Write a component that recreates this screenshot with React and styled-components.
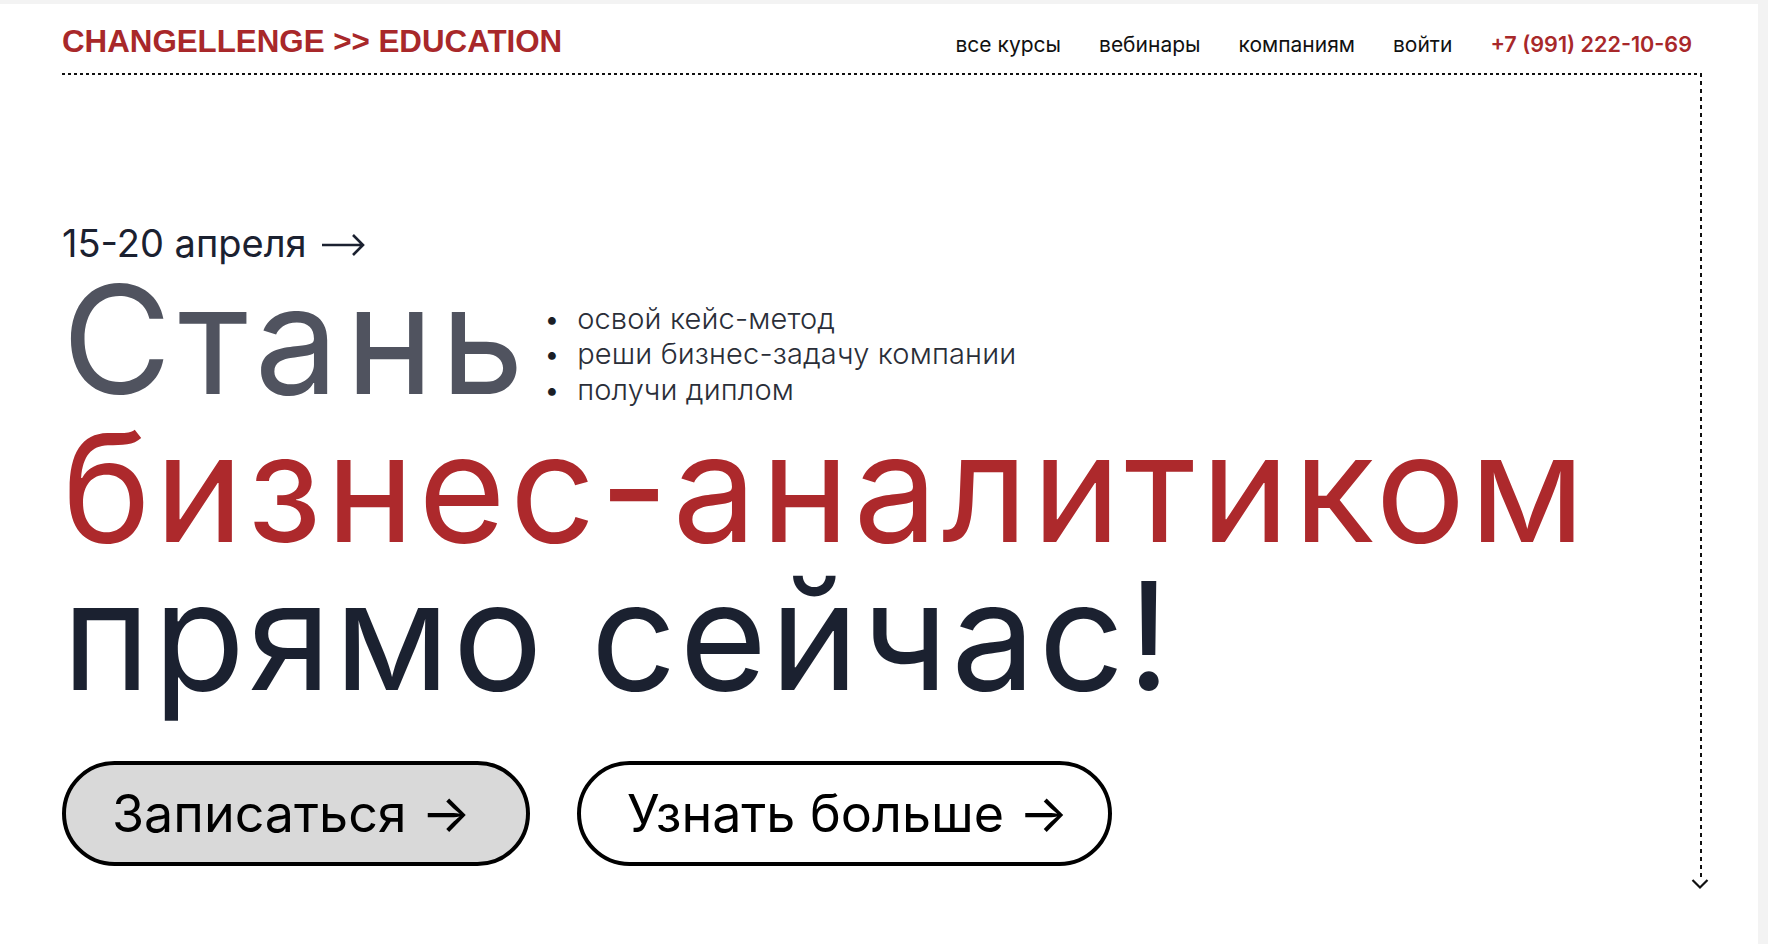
import styled, { createGlobalStyle } from "styled-components";

const GlobalStyle = createGlobalStyle`
  * {
    box-sizing: border-box;
  }

  body {
    margin: 0;
    background: #f3f3f3;
    font-family: Inter, "Noto Sans", sans-serif;
  }
`;

const Page = styled.main`
  margin: 4px 10px 0 0;
  min-height: 940px;
  background: #ffffff;
  padding: 0 56px 0 62px;
`;

const Header = styled.header`
  display: flex;
  align-items: baseline;
  justify-content: space-between;
  padding: 20px 10px 13px 0;
`;

const Logo = styled.a`
  font-family: "Liberation Sans", Arial, sans-serif;
  font-size: 31.3px;
  font-weight: 700;
  color: #a8282a;
  text-decoration: none;
`;

const Nav = styled.nav`
  display: flex;
  align-items: baseline;
  gap: 38px;
  padding-top: 2px;
`;

const NavLink = styled.a`
  font-size: ${(p) => (p.$accent ? 21.6 : 21)}px;
  font-weight: ${(p) => (p.$accent ? 600 : 400)};
  color: ${(p) => (p.$accent ? "#a8282a" : "#111111")};
  text-decoration: none;
`;

const Frame = styled.section`
  position: relative;
  height: 806px;
  padding: 147px 0 0 0;
  background:
    repeating-linear-gradient(to right, #111 0 3px, transparent 3px 6px) top left / 100% 2px no-repeat,
    repeating-linear-gradient(to bottom, #111 0 4px, transparent 4px 8px) top right / 2px 100% no-repeat;
`;

const DownArrow = styled.svg`
  position: absolute;
  right: -7px;
  bottom: -11px;
`;

const DateLine = styled.p`
  display: flex;
  align-items: center;
  gap: 14px;
  margin: 0;
  font-size: 38px;
  line-height: 46px;
  color: #1b2130;
`;

const LongArrow = styled.svg`
  margin-top: 4px;
`;

const Title = styled.h1`
  margin: 0;
  font-weight: 400;
  font-size: 150px;
  line-height: 148px;
`;

const TitleRow = styled.div`
  display: flex;
  align-items: flex-end;
  gap: 13px;
`;

const TitleLine = styled.span`
  display: block;
  color: ${(p) => p.$color};
  letter-spacing: ${(p) => p.$tracking || 0}px;
`;

const Perks = styled.ul`
  list-style: none;
  margin: 0 0 7px 0;
  padding: 0;
  font-size: 29px;
  font-weight: 300;
  line-height: 35.5px;
  letter-spacing: 0.15px;
  color: #2a2e38;

  li {
    display: flex;
    gap: 17px;
  }

  li::before {
    content: "•";
    color: #1b1e26;
  }
`;

const Actions = styled.div`
  display: flex;
  gap: 47px;
  margin-top: 51px;
`;

const PillButton = styled.button`
  display: inline-flex;
  align-items: center;
  justify-content: flex-start;
  width: ${(p) => p.$width}px;
  height: 105px;
  padding: 0 0 0 46px;
  border: 4px solid #000000;
  border-radius: 999px;
  background: ${(p) => (p.$filled ? "#d9d9d9" : "#ffffff")};
  font-family: Inter, "Noto Sans", sans-serif;
  font-size: 52px;
  color: #000000;
  cursor: pointer;
`;

export default function App() {
  return (
    <>
      <GlobalStyle />
      <Page>
        <Header>
          <Logo href="#">CHANGELLENGE &gt;&gt; EDUCATION</Logo>
          <Nav>
            <NavLink href="#">все курсы</NavLink>
            <NavLink href="#">вебинары</NavLink>
            <NavLink href="#">компаниям</NavLink>
            <NavLink href="#">войти</NavLink>
            <NavLink href="#" $accent>+7 (991) 222-10-69</NavLink>
          </Nav>
        </Header>

        <Frame>
          <DateLine>
            15-20 апреля
            <LongArrow width="44" height="24" viewBox="0 0 44 24" fill="none">
              <path d="M1 12 H42 M32 2 L42 12 L32 22" stroke="#1b2130" strokeWidth="2.6" />
            </LongArrow>
          </DateLine>
          <Title>
            <TitleRow>
              <TitleLine $color="#50535f" $tracking={6.5}>Стань</TitleLine>
              <Perks>
                <li>освой кейс-метод</li>
                <li>реши бизнес-задачу компании</li>
                <li>получи диплом</li>
              </Perks>
            </TitleRow>
            <TitleLine $color="#ad292c" $tracking={4}>бизнес-аналитиком</TitleLine>
            <TitleLine $color="#1b2130" $tracking={3}>прямо сейчас!</TitleLine>
          </Title>
          <Actions>
            <PillButton $filled $width={468}>Записаться →</PillButton>
            <PillButton $width={535}>Узнать больше →</PillButton>
          </Actions>
          <DownArrow width="18" height="12" viewBox="0 0 18 12" fill="none">
            <path d="M1.5 2 L9 9.5 L16.5 2" stroke="#111" strokeWidth="2.2" />
          </DownArrow>
        </Frame>
      </Page>
    </>
  );
}
